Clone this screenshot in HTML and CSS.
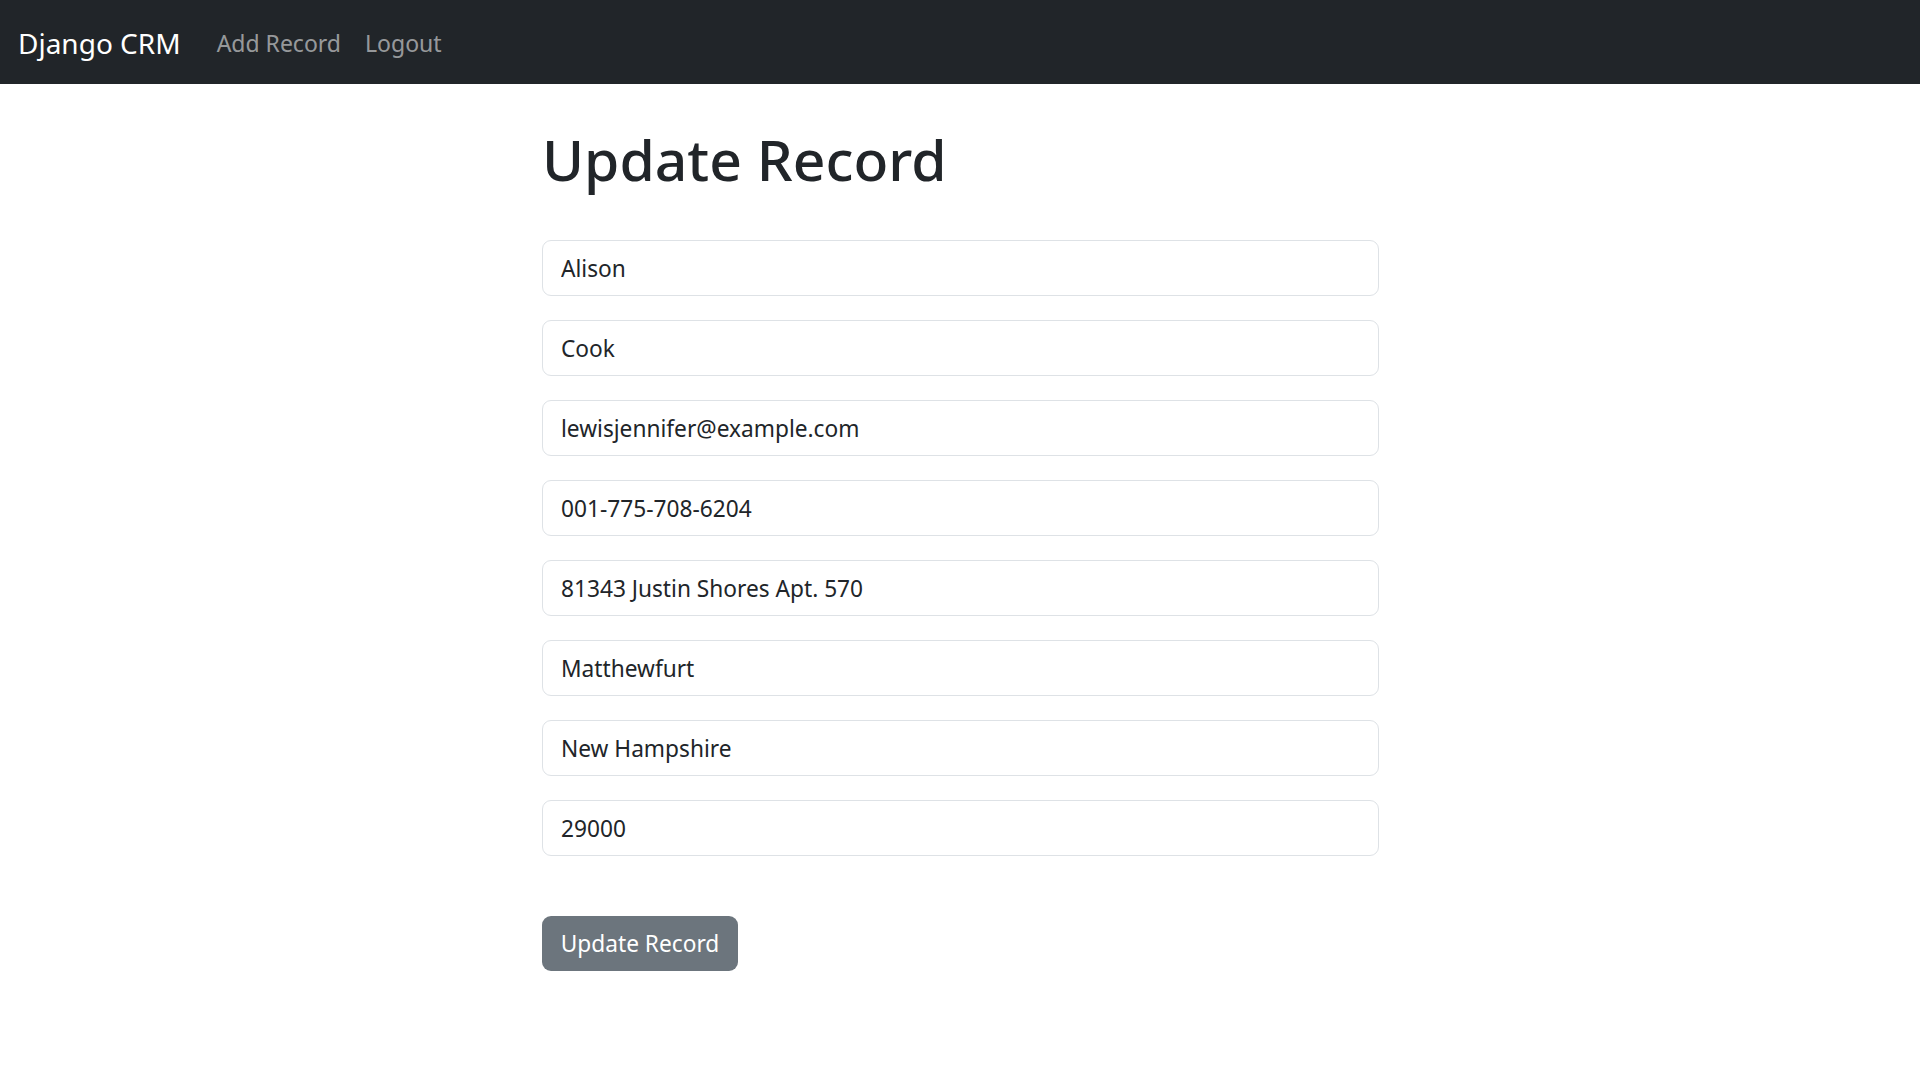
FILE: index.html
```html
<!DOCTYPE html>
<html lang="en">
<head>
<meta charset="utf-8">
<title>Django CRM</title>
<link rel="stylesheet" href="styles.css">
</head>
<body>
<nav class="navbar">
  <a class="brand" href="#">Django CRM</a>
  <ul class="nav">
    <li><a class="nav-link" href="#">Add Record</a></li>
    <li><a class="nav-link" href="#">Logout</a></li>
  </ul>
</nav>
<main class="content">
  <h1 class="title">Update Record</h1>
  <form class="form">
    <input class="field" type="text" value="Alison">
    <input class="field" type="text" value="Cook">
    <input class="field" type="text" value="lewisjennifer@example.com">
    <input class="field" type="text" value="001-775-708-6204">
    <input class="field" type="text" value="81343 Justin Shores Apt. 570">
    <input class="field" type="text" value="Matthewfurt">
    <input class="field" type="text" value="New Hampshire">
    <input class="field" type="text" value="29000">
    <button class="btn" type="button">Update Record</button>
  </form>
</main>
</body>
</html>
```

FILE: styles.css
```css
* { box-sizing: border-box; }
html, body { margin: 0; padding: 0; }
body {
  font-family: "Noto Sans", "Open Sans", sans-serif;
  color: #212529;
  background: #fff;
}
.navbar {
  height: 84px;
  background: #212529;
  display: flex;
  align-items: center;
  padding: 2px 18px 0 18px;
}
.brand {
  color: #fff;
  text-decoration: none;
  font-size: 28px;
  margin-right: 24px;
}
.nav {
  list-style: none;
  margin: 0;
  padding: 0;
  display: flex;
}
.nav-link {
  display: block;
  padding: 12px 12px;
  color: rgba(255,255,255,0.55);
  text-decoration: none;
  font-size: 23px;
}
.content {
  width: 837px;
  margin: 0 0 0 542px;
  padding-top: 1px;
}
.title {
  font-size: 57px;
  font-weight: 500;
  margin: 40px 0 47px 0;
  line-height: 1.2;
}
.form {
  display: flex;
  flex-direction: column;
  align-items: flex-start;
  margin-top: 0;
}
.field {
  width: 100%;
  height: 56px;
  border: 1.5px solid #dee2e6;
  border-radius: 9px;
  padding: 0 18px;
  font-family: inherit;
  font-size: 22.7px;
  color: #212529;
  margin-bottom: 24px;
  background: #fff;
}
.btn {
  margin-top: 36px;
  height: 55px;
  width: 196px;
  background: #6c757d;
  color: #fff;
  border: 0;
  border-radius: 9px;
  font-family: inherit;
  font-size: 22.7px;
  padding: 0;
}
```
